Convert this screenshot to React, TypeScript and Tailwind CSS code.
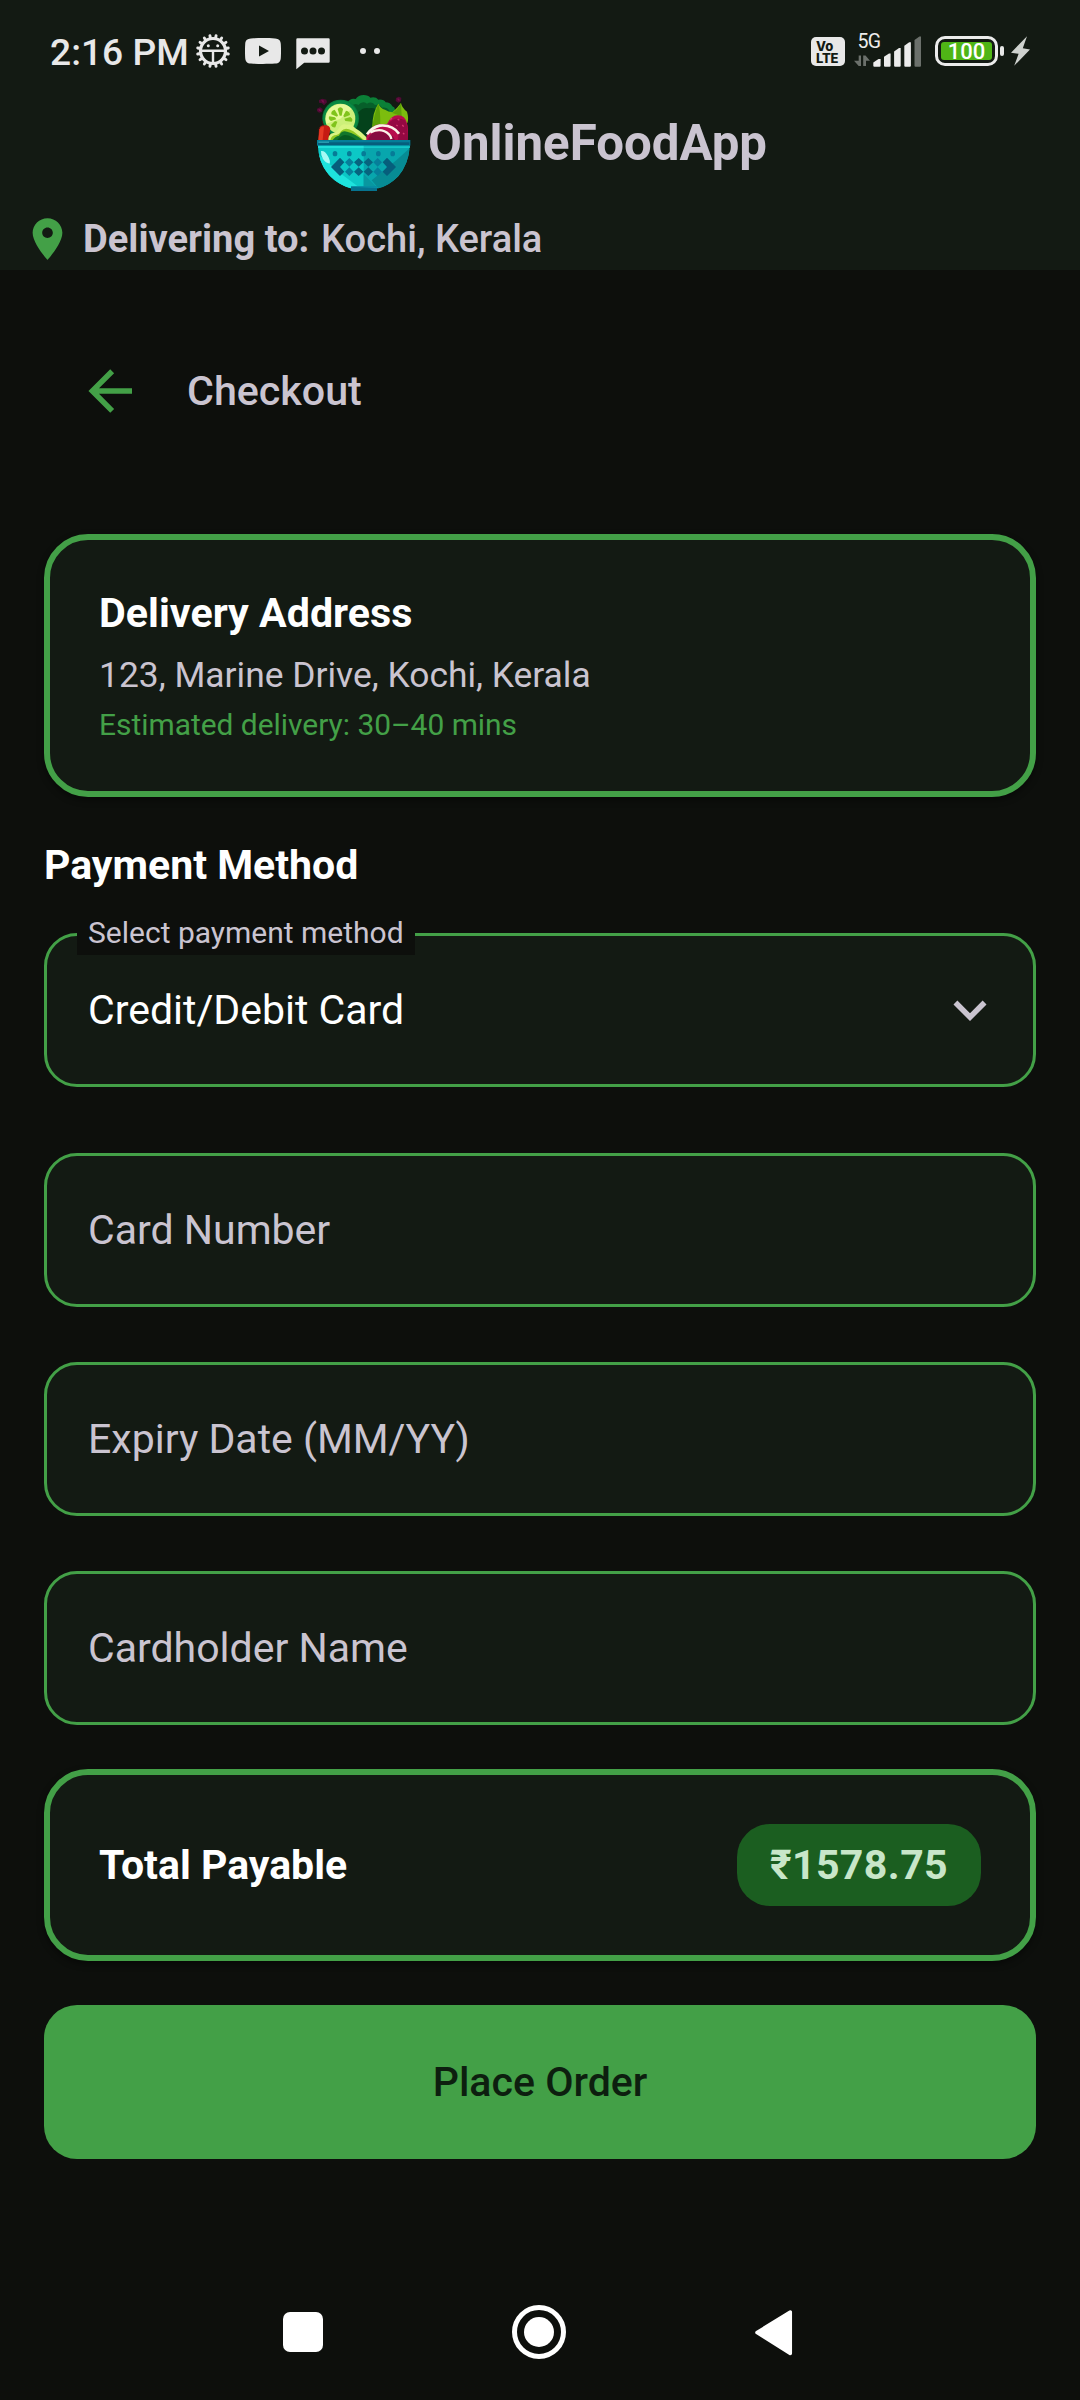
import React from "react";

const GEAR_TEETH = Array.from({ length: 16 }, (_, i) => (i * Math.PI * 2) / 16 + Math.PI / 16);

function GearIcon() {
  return (
    <svg viewBox="196 34 34 34" className="h-[34px] w-[34px] shrink-0">
      <circle cx="213" cy="51" r="12.5" fill="none" stroke="#e8e8e8" strokeWidth="3.2" />
      {GEAR_TEETH.map((a) => (
        <line
          key={a}
          x1={213 + Math.cos(a) * 13}
          y1={51 + Math.sin(a) * 13}
          x2={213 + Math.cos(a) * 15.6}
          y2={51 + Math.sin(a) * 15.6}
          stroke="#e8e8e8"
          strokeWidth="2.9"
          strokeLinecap="round"
        />
      ))}
      <path d="M201 50.7H225M213 51V63" fill="none" stroke="#e8e8e8" strokeWidth="2.4" />
      <circle cx="208.3" cy="45.7" r="1.5" fill="#e8e8e8" />
      <circle cx="217.7" cy="45.7" r="1.5" fill="#e8e8e8" />
    </svg>
  );
}

function VideoIcon() {
  return (
    <svg viewBox="245 38 36 26" className="ml-[15px] h-[26px] w-[36px] shrink-0">
      <path
        d="M251 38.4C258 37.9 268 37.9 275 38.4C279 38.6 280.6 40.4 280.8 44C281.1 49 281.1 53 280.8 58C280.6 61.6 279 63.4 275 63.6C268 64.1 258 64.1 251 63.6C247 63.4 245.4 61.6 245.2 58C244.9 53 244.9 49 245.2 44C245.4 40.4 247 38.6 251 38.4Z"
        fill="#e8e8e8"
      />
      <path d="M259 45.6V56.4L269 51Z" fill="#131a13" />
    </svg>
  );
}

function ChatIcon() {
  return (
    <svg viewBox="296 38 34 32" className="ml-[15px] h-[32px] w-[34px] shrink-0">
      <path d="M297.5 38.3H328.5Q329.7 38.3 329.7 39.5V61.5Q329.7 62.7 328.5 62.7H304.2L296.3 69.2V39.5Q296.3 38.3 297.5 38.3Z" fill="#e8e8e8" />
      <circle cx="304.5" cy="51" r="3.5" fill="#131a13" />
      <circle cx="313" cy="51" r="3.5" fill="#131a13" />
      <circle cx="321.5" cy="51" r="3.5" fill="#131a13" />
    </svg>
  );
}

function SignalIcon() {
  return (
    <svg viewBox="853 34 70 34" className="h-[34px] w-[70px]">
      <path d="M858.7 55.5H861V66H858.7V66L854 60.8H858.7ZM863.2 55.5H865.5L870 60.8H866V66H863.2Z" fill="#6b706b" />
      <path d="M873.3 62.5L878.5 59H880.6V65.7Q880.6 66.8 879.5 66.8H874.4Q873.3 66.8 873.3 65.7Z" fill="#ececec" />
      <path d="M884 56.8L889 53.4H890.6V65.7Q890.6 66.8 889.5 66.8H885.1Q884 66.8 884 65.7Z" fill="#ececec" />
      <path d="M894.1 51.5L899 48H900.7V65.7Q900.7 66.8 899.6 66.8H895.2Q894.1 66.8 894.1 65.7Z" fill="#ececec" />
      <path d="M904.3 45.8L909.2 42.2H910.9V65.7Q910.9 66.8 909.8 66.8H905.4Q904.3 66.8 904.3 65.7Z" fill="#ececec" />
      <path d="M914.5 39.9L919.4 36.5H921V65.7Q921 66.8 919.9 66.8H915.6Q914.5 66.8 914.5 65.7Z" fill="#6b706b" />
    </svg>
  );
}

function BowlLogo() {
  return (
    <svg viewBox="45 27 288 294" className="h-[98px] w-[96px] shrink-0">
      {/* leafy greens */}
      <path d="M140 52q8-14 24-10q8-12 24-12q14 0 20 8q16-4 24 6q16-2 22 8q14 0 20 12q8 2 8 10l-30 96H130Z" fill="#0b8037" />
      <path d="M150 66q10-14 22-6q12-14 26-4q14-8 24 4q14-4 22 8q14-2 22 10l-30 90H140Z" fill="#075f2a" />
      <path d="M172 82q14-16 32-12q20-4 34 14l-8 84H158Z" fill="#04421b" />
      {/* berries */}
      <path d="M54 45l10-4 12 3 2 8-9 9-6-6-9-2ZM48 71l9-4 8 5-2 9-9 2-6-5ZM285 39l8-4 8 3-1 11-8 4-8-5Z" fill="#4f0a34" />
      <path d="M60 44l8 2 2 8-6-2ZM52 72l6 1 2 6-6-1ZM289 40l6 1 1 7-6-2Z" fill="#75104a" />
      {/* lime slice */}
      <ellipse cx="119" cy="100" rx="55" ry="56" fill="#087b3d" />
      <ellipse cx="119" cy="100" rx="52" ry="53" fill="#0a8a42" />
      <circle cx="118" cy="101" r="45" fill="#cdf07a" />
      <path d="M76 116A45 45 0 0 1 152 72L118 101Z" fill="#e6fa9a" />
      <g fill="#80c41c">
        <path d="M116 92l-6-20q8-10 16 0l-4 20Z" />
        <path d="M108 95l-17-7q-2-11 10-14l10 17Z" />
        <path d="M106 103l-16 5q-10-6-5-14l17 3Z" />
        <path d="M109 110l-6 17q-10 2-13-7l12-12Z" />
        <path d="M127 92l8-15q12 2 12 13l-17 7Z" />
        <path d="M130 101l18-5q10 7 4 14l-19-2Z" />
      </g>
      {/* tomato */}
      <path d="M54 132q4-12 16-11q16-2 18 12l-6 33H52Z" fill="#c51b12" />
      <path d="M56 132q5-10 13-7l-4 41H52Z" fill="#e43a24" />
      <path d="M67 121l-4-13M56 130l-6 4" stroke="#401010" strokeWidth="3" />
      {/* avocado */}
      <path d="M82 166q-1-14 8-20q14-2 22-14q10-18 26-13q14-3 24 10q24 14 42 37Z" fill="#d9f481" />
      <path d="M88 166q2-12 12-15q14 0 20-12q10-12 24-6q14 4 24 15l22 18Z" fill="#91c922" />
      <path d="M94 166q8-12 20-14q8-17 24-12q26 6 48 26Z" fill="#11762b" />
      <path d="M108 166q10-14 24-16 22 2 34 16Z" fill="#065a20" />
      {/* mint leaves */}
      <path d="M214 126q0-44 18-70q6 14 20 18q10 6 22 8q16-14 26-28q2 14 18 26q6 20 1 34l-40 22Z" fill="#7cbd0e" />
      <path d="M214 126q6-40 18-70q6 18 6 60ZM274 84q18-12 26-30l2 40Z" fill="#5da008" />
      {/* radish */}
      <path d="M196 166q-2-22 16-38q18-14 34-9l12-2q14-28 34-26q20 0 26 24q5 12 2 51Z" fill="#b80d4c" />
      <path d="M262 116q20-24 50-10q10 16 8 60h-30q10-28-28-50Z" fill="#950842" />
      <path d="M202 160q14-26 42-20q28 0 38 26h-80Z" fill="#870a3e" />
      <path d="M268 104l5-5M290 102l5 4M304 120l4 5M306 144l4 4M286 120l4 3" stroke="#d6396f" strokeWidth="4" />
      <path d="M198 148q14-20 38-26q38-4 58 24" fill="none" stroke="#fbf3e8" strokeWidth="8" />
      <path d="M208 142q34-16 56 6q6 6 7 14" fill="none" stroke="#fbf3e8" strokeWidth="7" />
      {/* bowl */}
      <path d="M51 180H326Q324 236 292 274Q264 302 232 310H150Q112 300 84 270Q52 232 51 180Z" fill="#08a6ad" />
      <path d="M51 180H188V310H150Q112 300 84 270Q52 232 51 180Z" fill="#0cc8c6" />
      <path d="M54 210Q62 248 90 276Q118 302 150 310H178L120 266Z" fill="#1ee3dd" />
      <path d="M188 268L230 310H188Z" fill="#0997a0" />
      <path d="M326 190Q322 238 290 275Q264 302 232 310L212 286L286 226Z" fill="#078b94" />
      <path d="M51 182H326V189H51Z" fill="#20dfda" />
      <path d="M188 182H326V188H188Z" fill="#10bfc2" />
      <rect x="48" y="165" width="280" height="17" fill="#057d98" />
      <rect x="51" y="172" width="274" height="8" fill="#065e7c" />
      <rect x="52" y="170" width="32" height="3" fill="#39b3c2" />
      <path d="M60 198q12-2 21 16q8 14 5 22q-12-2-20-14q-7-12-6-24Z" fill="#a6faf5" />
      <g fill="#067b97">
        <ellipse cx="102" cy="206" rx="7" ry="8" />
        <ellipse cx="145" cy="206" rx="7" ry="8" />
        <ellipse cx="188" cy="206" rx="7" ry="8" />
        <ellipse cx="232" cy="206" rx="7" ry="8" />
        <ellipse cx="275" cy="206" rx="7" ry="8" />
      </g>
      <path d="M90 246L117 218L130 232L117 246L130 260L117 273ZM285 246L258 218L245 232L258 246L245 260L258 273Z" fill="#065e7c" />
      <g fill="#067f9a">
        <path d="M145 219l13 13-13 13-13-13ZM145 247l13 13-13 13-13-13ZM230 219l13 13-13 13-13-13ZM230 247l13 13-13 13-13-13Z" />
      </g>
      <path d="M173 219l14 13-14 13-14-13ZM173 247l14 13-14 13-14-13ZM202 219l14 13-14 13-14-13ZM202 247l14 13-14 13-14-13Z" fill="#06647f" />
      <rect x="150" y="304" width="78" height="14" fill="#06738f" />
      <path d="M150 304H228V309L160 306Z" fill="#0892a8" />
    </svg>
  );
}

function StatusBar() {
  return (
    <div className="flex h-[102px] items-start pl-[50px] pr-[50px]">
      <div className="mt-[32px] h-10 w-[146px] shrink-0 whitespace-nowrap text-[37.2px] font-medium leading-10 text-[#e8e8e8]">2:16 PM</div>
      <div className="mt-[34px] flex h-[36px] items-start">
        <GearIcon />
        <div className="flex pt-1">
          <VideoIcon />
          <ChatIcon />
        </div>
        <div className="ml-[30px] mt-[14px] flex gap-2">
          <span className="h-1.5 w-1.5 rounded-full bg-[#e8e8e8]" />
          <span className="h-1.5 w-1.5 rounded-full bg-[#e8e8e8]" />
        </div>
      </div>
      <div className="ml-auto mt-[34px] flex items-start">
        <div className="mt-[3px] flex h-[29px] w-[34px] flex-col rounded-[5px] bg-[#e8e8e8] pl-[5px] pt-[3px] font-['Inter'] text-[13px] font-extrabold leading-[12px] text-[#131a13]">
          <span>Vo</span>
          <span className="tracking-[-0.2px]">LTE</span>
        </div>
        <div className="relative ml-2 h-[34px] w-[70px]">
          <SignalIcon />
          <span className="absolute left-[4.5px] top-[-2px] text-[19.5px] leading-5 tracking-[-0.6px] text-[#ececec]">5G</span>
        </div>
        <div className="ml-3 mt-[2px] flex h-[30px] w-[63px] items-center rounded-[10px] border-[3.4px] border-[#ececec] p-[3.2px]">
          <div className="flex h-full w-full items-center justify-center rounded-[3px] bg-[#4fb516] text-[22px] font-medium leading-[18px] text-white">
            <span className="relative top-px">100</span>
          </div>
        </div>
        <div className="ml-[2px] mt-[12px] h-[10px] w-[4px] rounded-[2px] bg-[#e8e8e8]" />
        <svg viewBox="1010 36 20 30" className="ml-[6px] mt-[2px] h-[30px] w-[20px]">
          <path d="M1027 36.2L1011 52.8L1018.6 53.8L1014.2 65.8L1030 49.4L1022.8 48.2Z" fill="#cfd2cf" />
        </svg>
      </div>
    </div>
  );
}

function Header() {
  return (
    <header className="flex h-[270px] flex-col bg-[#131a13]">
      <StatusBar />
      <div className="-mt-2 flex h-[98px] items-start justify-center pl-[3px]">
        <BowlLogo />
        <h1 className="ml-4 mt-[17px] h-16 text-[49.2px] font-bold leading-[64px]">OnlineFoodApp</h1>
      </div>
      <div className="mt-[22px] flex h-[50px] items-center pl-[22px]">
        <svg viewBox="0 0 24 24" preserveAspectRatio="none" className="h-[50px] w-[51px]">
          <path
            fill="#43a047"
            d="M12 2C8.13 2 5 5.13 5 9c0 5.25 7 13 7 13s7-7.75 7-13c0-3.87-3.13-7-7-7zm0 9.5c-1.38 0-2.5-1.12-2.5-2.5s1.12-2.5 2.5-2.5 2.5 1.12 2.5 2.5-1.12 2.5-2.5 2.5z"
          />
        </svg>
        <span className="ml-[10px] w-[238px] whitespace-nowrap text-[38.1px] font-bold leading-[50px]">Delivering to:</span>
        <span className="whitespace-nowrap text-[38.1px] font-medium leading-[50px]">Kochi, Kerala</span>
      </div>
    </header>
  );
}

function Field({ label }: { label: string }) {
  return (
    <div className="flex h-[154px] items-center rounded-[33px] border-[3px] border-[#43a047] bg-[#131a13] pl-[41px] pt-[2px] text-[41px]">
      {label}
    </div>
  );
}

export default function App() {
  return (
    <div className="flex h-[2400px] w-[1080px] flex-col overflow-hidden bg-[#0d0f0c] font-['Roboto',sans-serif] text-[#cac4d0]">
      <Header />
      <div className="mt-[88px] flex h-[66px] items-center pl-[77px]">
        <svg viewBox="0 0 24 24" className="h-[66px] w-[66px]">
          <path fill="#43a047" d="M20,11V13H8L13.5,18.5L12.08,19.92L4.16,12L12.08,4.08L13.5,5.5L8,11H20Z" />
        </svg>
        <h2 className="ml-[44px] text-[41.2px] font-medium leading-[66px]">Checkout</h2>
      </div>

      <main className="flex flex-col px-[44px]">
        <section className="mt-[110px] h-[263px] rounded-[44px] border-[6px] border-[#43a047] bg-[#131a13] pl-[49px] pt-[43px] shadow-[0_3px_7px_rgba(0,0,0,0.45)]">
          <h3 className="text-[41.2px] font-bold leading-[60px] text-white">Delivery Address</h3>
          <p className="mt-[7px] text-[35.4px] leading-[50px]">123, Marine Drive, Kochi, Kerala</p>
          <p className="mt-[3px] text-[29.9px] leading-[44px] text-[#43a047]">Estimated delivery: 30–40 mins</p>
        </section>

        <h3 className="mt-[38px] h-[60px] text-[41px] font-bold leading-[60px] text-white">Payment Method</h3>

        <div className="relative mt-[38px] flex h-[154px] items-center justify-between rounded-[33px] border-[3px] border-[#43a047] bg-[#131a13] pl-[41px] pr-[30px]">
          <span className="absolute left-[30px] top-[-25px] h-[44px] w-[338px] bg-[#0d0f0c] pl-[11px] text-[30px] leading-[43px]">Select payment method</span>
          <span className="pt-[2px] text-[41px] text-white">Credit/Debit Card</span>
          <svg viewBox="0 0 24 24" className="h-[66px] w-[66px]">
            <path fill="#cac4d0" d="M7.41,8.58L12,13.17L16.59,8.58L18,10L12,16L6,10L7.41,8.58Z" />
          </svg>
        </div>

        <div className="mt-[66px] flex flex-col gap-[55px]">
          <Field label="Card Number" />
          <Field label="Expiry Date (MM/YY)" />
          <Field label="Cardholder Name" />
        </div>

        <section className="mt-[44px] flex h-[192px] items-center justify-between rounded-[44px] border-[6px] border-[#43a047] bg-[#131a13] pl-[49px] pr-[49px] shadow-[0_3px_7px_rgba(0,0,0,0.45)]">
          <h3 className="pt-[2px] text-[41px] font-bold text-white">Total Payable</h3>
          <div className="flex h-[82px] w-[244px] items-center justify-center rounded-[33px] bg-[#1b5e20] pt-[2px] text-[41.1px] font-bold tracking-[0.4px] text-[#c8e6c9]">
            ₹1578.75
          </div>
        </section>

        <button className="mt-[44px] h-[154px] rounded-[33px] bg-[#43a047] pt-[2px] text-[41.1px] font-medium text-[#0d1f0f]">Place Order</button>
      </main>

      <nav className="mt-auto mb-[41px] flex h-[54px] items-center pl-[283px]">
        <span className="h-10 w-10 rounded-[7px] bg-white" />
        <span className="ml-[189px] flex h-[54px] w-[54px] items-center justify-center rounded-full border-[5px] border-white">
          <span className="h-[30px] w-[30px] rounded-full bg-white" />
        </span>
        <svg viewBox="755 2308 38 47" className="ml-[189px] h-[47px] w-[38px]">
          <path d="M757 2331.5L790.3 2311V2352.5Z" fill="white" stroke="white" strokeWidth="3.5" strokeLinejoin="round" />
        </svg>
      </nav>
    </div>
  );
}
